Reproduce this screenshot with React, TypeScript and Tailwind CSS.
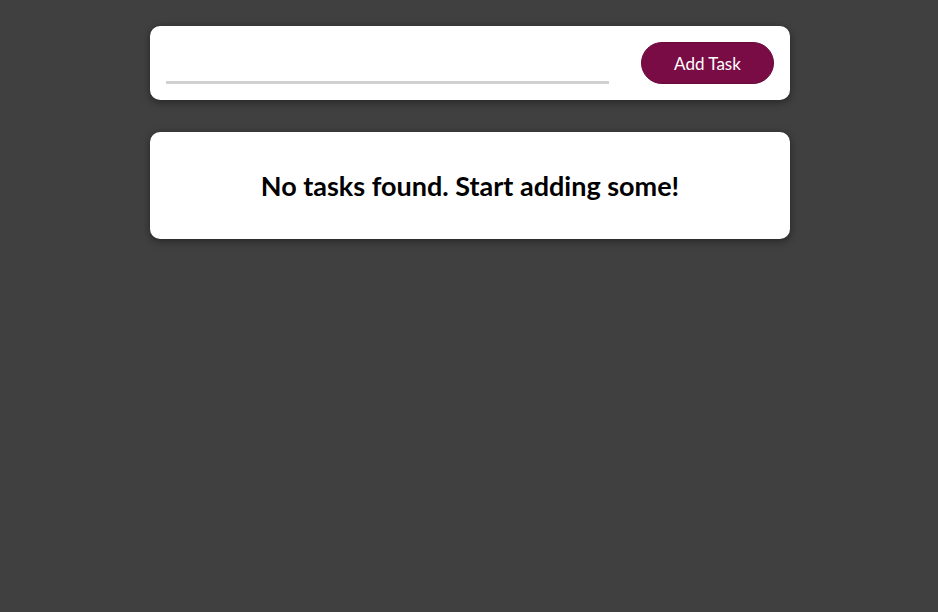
import React, { useState } from 'react';

export default function App() {
  const [task, setTask] = useState('');

  return (
    <div className="min-h-screen w-full bg-[#404040] pt-[26px] font-['Lato','Open_Sans',sans-serif]">
      <div className="ml-[150px] w-[640px] flex flex-col gap-8">
        <div className="flex items-end gap-8 rounded-[10px] bg-white p-4 shadow-[0_2px_8px_rgba(0,0,0,0.45)]">
          <input
            value={task}
            onChange={e => setTask(e.target.value)}
            className="flex-1 h-[41px] border-0 border-b-[3px] border-[#d0d0d0] bg-transparent outline-none text-base"
          />
          <button className="h-[42px] w-[133px] rounded-full bg-[#7a0c45] text-white text-[17px] pt-[2px] border border-[#6a0a3b]">
            Add Task
          </button>
        </div>

        <div className="flex h-[107px] items-center justify-center rounded-[10px] bg-white shadow-[0_2px_8px_rgba(0,0,0,0.45)]">
          <h2 className="text-[27px] font-bold text-black pt-[2px]">No tasks found. Start adding some!</h2>
        </div>
      </div>
    </div>
  );
}
